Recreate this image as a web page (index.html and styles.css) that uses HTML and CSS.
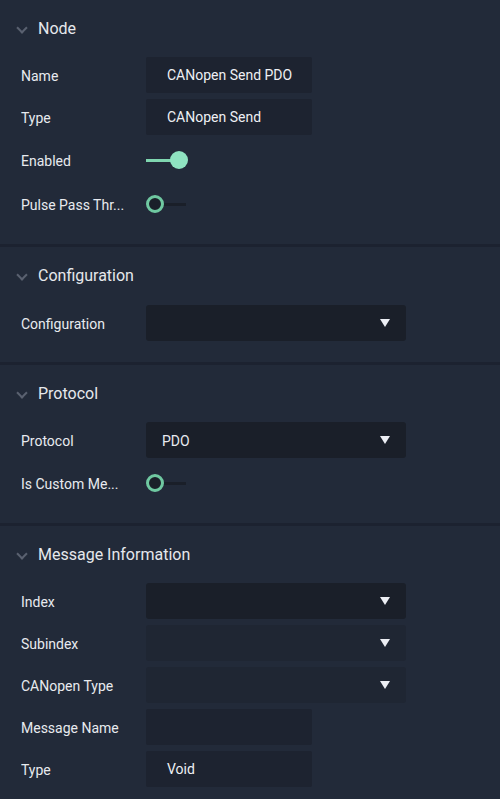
FILE: index.html
```html
<!DOCTYPE html>
<html>
<head>
<meta charset="utf-8">
<link rel="stylesheet" href="styles.css">
</head>
<body>
<div class="panel">
  <section class="section">
    <div class="header"><span class="chev"></span><span class="title">Node</span></div>
    <div class="rows">
      <div class="row"><span class="label">Name</span><div class="input">CANopen Send PDO</div></div>
      <div class="row"><span class="label">Type</span><div class="input">CANopen Send</div></div>
      <div class="row trow"><span class="label">Enabled</span><div class="toggle on"><span class="track"></span><span class="knob"></span></div></div>
      <div class="row trow"><span class="label">Pulse Pass Thr...</span><div class="toggle off"><span class="track"></span><span class="knob"></span></div></div>
    </div>
  </section>
  <section class="section">
    <div class="header"><span class="chev"></span><span class="title">Configuration</span></div>
    <div class="rows">
      <div class="row"><span class="label">Configuration</span><div class="select"><span class="val"></span><span class="arrow"></span></div></div>
    </div>
  </section>
  <section class="section">
    <div class="header"><span class="chev"></span><span class="title">Protocol</span></div>
    <div class="rows">
      <div class="row"><span class="label">Protocol</span><div class="select"><span class="val">PDO</span><span class="arrow"></span></div></div>
      <div class="row trow"><span class="label">Is Custom Me...</span><div class="toggle off"><span class="track"></span><span class="knob"></span></div></div>
    </div>
  </section>
  <section class="section">
    <div class="header"><span class="chev"></span><span class="title">Message Information</span></div>
    <div class="rows">
      <div class="row"><span class="label">Index</span><div class="select"><span class="val"></span><span class="arrow"></span></div></div>
      <div class="row"><span class="label">Subindex</span><div class="select dis"><span class="val"></span><span class="arrow"></span></div></div>
      <div class="row"><span class="label">CANopen Type</span><div class="select dis"><span class="val"></span><span class="arrow"></span></div></div>
      <div class="row"><span class="label">Message Name</span><div class="input"></div></div>
      <div class="row"><span class="label">Type</span><div class="input">Void</div></div>
    </div>
  </section>
</div>
</body>
</html>
```

FILE: styles.css
```css
html, body {
  margin: 0;
  padding: 0;
  background: #222a39;
}
body {
  font-family: Roboto, "Noto Sans", sans-serif;
  font-size: 14px;
  color: #e8eaef;
  width: 500px;
  height: 799px;
  overflow: hidden;
}
.panel {
  display: flex;
  flex-direction: column;
}
.section {
  padding: 10px 0 21px 0;
  border-bottom: 3px solid #1c2230;
}
.section:nth-child(2) .rows {
  margin-top: 12px;
}
.header {
  height: 36px;
  display: flex;
  align-items: center;
  padding-left: 16px;
}
.chev {
  width: 6px;
  height: 6px;
  border-right: 2px solid #5a6170;
  border-bottom: 2px solid #5a6170;
  transform: rotate(45deg);
  margin: 0 12px 0 2px;
}
.title {
  font-size: 16px;
  color: #e6e8ec;
  padding-top: 1px;
}
.rows {
  margin-top: 11px;
  display: flex;
  flex-direction: column;
  gap: 6px;
}
.row {
  height: 36px;
  display: flex;
  align-items: center;
  padding-left: 21px;
}
.row.trow {
  height: 38px;
}
.label {
  width: 125px;
  white-space: nowrap;
  overflow: hidden;
  padding-top: 2px;
}
.input {
  width: 145px;
  height: 36px;
  background: #1d2330;
  border-radius: 2px;
  padding-left: 21px;
  display: flex;
  align-items: center;
  box-sizing: content-box;
  color: #eef0f4;
}
.input, .select .val {
  line-height: 18px;
}
.input {
  padding-top: 0;
}
.select {
  width: 260px;
  height: 36px;
  background: #1a1f29;
  border-radius: 3px;
  display: flex;
  align-items: center;
  justify-content: space-between;
  box-sizing: border-box;
  padding: 0 16px;
}
.select .val {
  padding-top: 2px;
}
.select.dis {
  background: #1f2633;
}
.arrow {
  width: 0;
  height: 0;
  border-left: 5px solid transparent;
  border-right: 5px solid transparent;
  border-top: 8px solid #eceef4;
}
.toggle {
  position: relative;
  width: 42px;
  height: 20px;
}
.toggle .track {
  position: absolute;
  left: 0;
  top: 9px;
  height: 3px;
  width: 40px;
  background: #1a1f29;
}
.toggle.on .track {
  width: 30px;
  background: #7fd6b0;
}
.toggle .knob {
  position: absolute;
  top: 1px;
  width: 18px;
  height: 18px;
  border-radius: 50%;
  box-sizing: border-box;
}
.toggle.on .knob {
  left: 24px;
  background: #8fe3c1;
}
.toggle.off .knob {
  left: 0;
  background: #1a1f29;
  border: 3px solid #6fc8a1;
}
```
